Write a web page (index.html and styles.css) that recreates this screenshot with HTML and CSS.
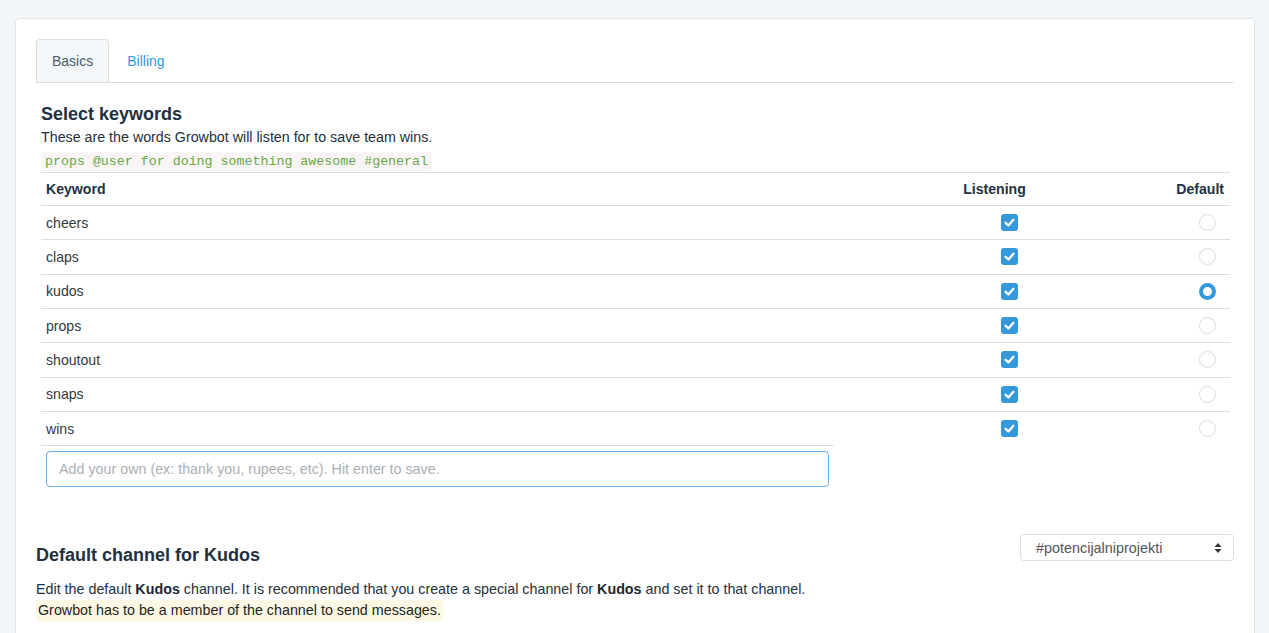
FILE: index.html
```html
<!DOCTYPE html>
<html lang="en">
<head>
    <meta charset="UTF-8">
    <title>Growbot settings</title>
    <link rel="stylesheet" href="styles.css">
</head>
<body>
    <div class="page">
        <div class="card">
            <!-- Tabs -->
            <div class="nav-tabs">
                <a class="tab active">Basics</a>
                <a class="tab">Billing</a>
            </div>

            <!-- Keywords -->
            <div class="keywords">
                <h3 class="section-title">Select keywords</h3>
                <p class="lead">These are the words Growbot will listen for to save team wins.</p>
                <code class="example">props @user for doing something awesome #general</code>

                <div class="kw-table">
                    <div class="cell head">Keyword</div>
                    <div class="cell head right">Listening</div>
                    <div class="cell head right">Default</div>

                    <div class="cell">cheers</div>
                    <div class="cell right"><span class="check"><svg viewBox="0 0 17 17"><path d="M4.6 8.8 L7.4 11.4 L12.4 5.8"/></svg></span></div>
                    <div class="cell right"><span class="radio"></span></div>

                    <div class="cell">claps</div>
                    <div class="cell right"><span class="check"><svg viewBox="0 0 17 17"><path d="M4.6 8.8 L7.4 11.4 L12.4 5.8"/></svg></span></div>
                    <div class="cell right"><span class="radio"></span></div>

                    <div class="cell">kudos</div>
                    <div class="cell right"><span class="check"><svg viewBox="0 0 17 17"><path d="M4.6 8.8 L7.4 11.4 L12.4 5.8"/></svg></span></div>
                    <div class="cell right"><span class="radio selected"></span></div>

                    <div class="cell">props</div>
                    <div class="cell right"><span class="check"><svg viewBox="0 0 17 17"><path d="M4.6 8.8 L7.4 11.4 L12.4 5.8"/></svg></span></div>
                    <div class="cell right"><span class="radio"></span></div>

                    <div class="cell">shoutout</div>
                    <div class="cell right"><span class="check"><svg viewBox="0 0 17 17"><path d="M4.6 8.8 L7.4 11.4 L12.4 5.8"/></svg></span></div>
                    <div class="cell right"><span class="radio"></span></div>

                    <div class="cell">snaps</div>
                    <div class="cell right"><span class="check"><svg viewBox="0 0 17 17"><path d="M4.6 8.8 L7.4 11.4 L12.4 5.8"/></svg></span></div>
                    <div class="cell right"><span class="radio"></span></div>

                    <div class="cell">wins</div>
                    <div class="cell right"><span class="check"><svg viewBox="0 0 17 17"><path d="M4.6 8.8 L7.4 11.4 L12.4 5.8"/></svg></span></div>
                    <div class="cell right"><span class="radio"></span></div>

                    <div class="input-cell">
                        <input class="add-input" type="text" placeholder="Add your own (ex: thank you, rupees, etc). Hit enter to save." autofocus>
                    </div>
                </div>
            </div>

            <!-- Default channel -->
            <div class="channel">
                <div class="channel-head">
                    <h3 class="section-title channel-title">Default channel for Kudos</h3>
                    <div class="select">
                        <span>#potencijalniprojekti</span>
                        <svg class="caret" viewBox="0 0 8 12"><path d="M4 1 L7.5 5 H0.5 Z M4 11 L0.5 7 H7.5 Z"/></svg>
                    </div>
                </div>
                <p class="channel-text">Edit the default <b>Kudos</b> channel. It is recommended that you create a special channel for <b>Kudos</b> and set it to that channel.</p>
                <div class="notice">Growbot has to be a member of the channel to send messages.</div>
            </div>
        </div>
    </div>
</body>
</html>
```

FILE: styles.css
```css
body {
    margin: 0;
    font-family: "Liberation Sans", Arial, sans-serif;
    font-size: 14px;
    color: #333333;
    background-color: #f3f6f9;
}
.page {
    padding: 18px 14px 0 15px;
}
.card {
    background-color: #ffffff;
    border: 1px solid #dfe5eb;
    border-radius: 4px;
    padding: 20px 20px 40px 20px;
}

/* tabs */
.nav-tabs {
    display: flex;
    border-bottom: 1px solid #dddddd;
}
.tab {
    display: block;
    padding: 11px 15px;
    line-height: 20px;
    margin-right: 2px;
    color: #3498db;
    border: 1px solid transparent;
    border-bottom: none;
    border-radius: 4px 4px 0 0;
}
.tab.active {
    color: #4d5b69;
    background-color: #f4f7fa;
    border-color: #dddddd;
}

/* keywords */
.keywords {
    padding: 0 4px 0 5px;
}
.section-title {
    margin: 20px 0 0 0;
    font-size: 18px;
    line-height: 22px;
    font-weight: bold;
    color: #22313f;
}
.lead {
    margin: 2px 0 0 0;
    font-size: 14.25px;
    line-height: 20px;
    color: #24303c;
}
.example {
    display: inline-block;
    margin-top: 5px;
    padding: 2px 4px;
    font-family: "Liberation Mono", "Courier New", monospace;
    font-size: 13.3px;
    line-height: 15px;
    color: #66a946;
    background-color: #f9f4f5;
    border-radius: 3px;
}
.kw-table {
    display: grid;
    grid-template-columns: 8fr 2fr 2fr;
    margin-top: 1px;
}
.cell {
    box-sizing: border-box;
    height: 34.33px;
    padding: 0 5px;
    border-top: 1px solid #dddddd;
    display: flex;
    align-items: center;
    font-size: 14.1px;
    color: #2f3a45;
}
.cell.head {
    height: 33px;
    padding-bottom: 1px;
    font-weight: bold;
    color: #22313f;
}
.cell.head.right {
    padding-right: 6px;
}
.cell.right {
    justify-content: flex-end;
}
.check {
    width: 17px;
    height: 17px;
    margin-right: 9px;
    background-color: #3498db;
    border-radius: 3px;
}
.check svg {
    display: block;
    width: 17px;
    height: 17px;
    fill: none;
    stroke: #ffffff;
    stroke-width: 2.3;
    stroke-linecap: round;
    stroke-linejoin: round;
}
.radio {
    box-sizing: border-box;
    width: 17px;
    height: 17px;
    margin-right: 9px;
    border: 1px solid #dcdcdc;
    border-radius: 50%;
    background-color: #ffffff;
}
.radio.selected {
    border: 4px solid #3498db;
}
.input-cell {
    border-top: 1px solid #dddddd;
    padding: 5px 5px 0 5px;
}
.add-input {
    box-sizing: border-box;
    display: block;
    width: 100%;
    height: 36px;
    padding: 0 12px;
    font-family: "Liberation Sans", Arial, sans-serif;
    font-size: 14.3px;
    color: #333333;
    border: 1px solid #66afe9;
    border-radius: 4px;
    outline: none;
}
.add-input::placeholder {
    color: #aab0b6;
}

/* default channel */
.channel {
    margin-top: 47px;
}
.channel-head {
    display: flex;
    justify-content: space-between;
    align-items: flex-start;
}
.channel-title {
    margin-top: 10px;
}
.select {
    box-sizing: border-box;
    width: 214px;
    height: 27px;
    padding: 0 11px 0 15px;
    border: 1px solid #dddddd;
    border-radius: 4px;
    display: flex;
    align-items: center;
    justify-content: space-between;
    font-size: 14.4px;
    color: #555555;
}
.caret {
    width: 8px;
    height: 12px;
    fill: #333333;
}
.channel-text {
    margin: 13px 0 0 0;
    font-size: 14.3px;
    line-height: 20px;
    color: #24303c;
}
.channel-text b {
    color: #1c2833;
}
.notice {
    display: inline-block;
    margin-top: 1px;
    padding: 1px 2px;
    font-size: 14.3px;
    line-height: 19px;
    color: #1e1e1e;
    background-color: #fcf8e3;
}
```
